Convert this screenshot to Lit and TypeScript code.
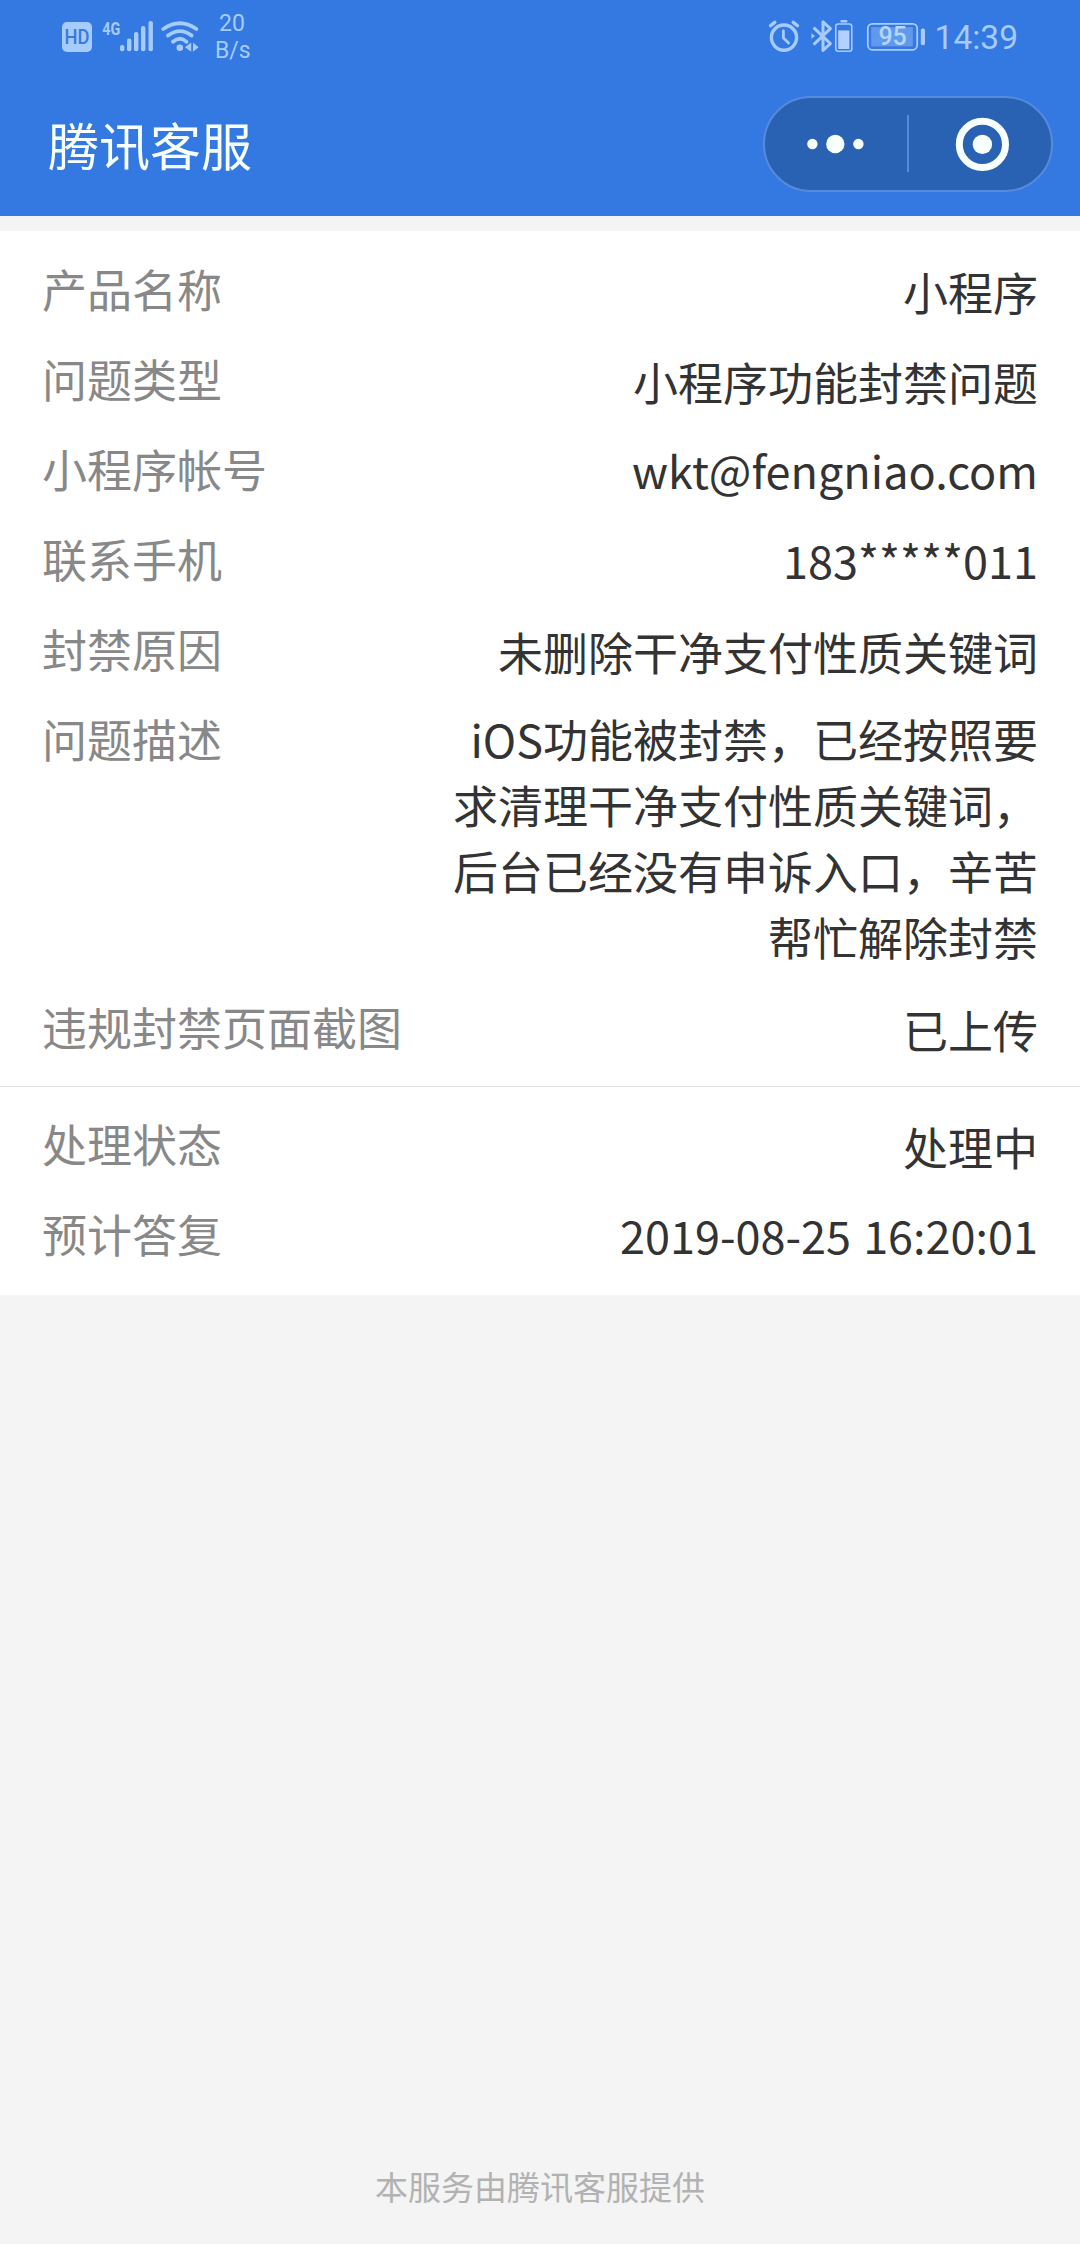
import { LitElement, html, svg, css } from "lit";
import { customElement, property } from "lit/decorators.js";

interface Entry {
  label: string;
  value: string;
  kind?: "long" | "latin" | "time";
}

const REQUEST: Entry[] = [
  { label: "产品名称", value: "小程序" },
  { label: "问题类型", value: "小程序功能封禁问题" },
  { label: "小程序帐号", value: "wkt@fengniao.com", kind: "latin" },
  { label: "联系手机", value: "183*****011", kind: "latin" },
  { label: "封禁原因", value: "未删除干净支付性质关键词" },
  {
    label: "问题描述",
    value: "iOS功能被封禁，已经按照要求清理干净支付性质关键词，后台已经没有申诉入口，辛苦帮忙解除封禁",
    kind: "long",
  },
  { label: "违规封禁页面截图", value: "已上传" },
];

const PROGRESS: Entry[] = [
  { label: "处理状态", value: "处理中" },
  { label: "预计答复", value: "2019-08-25 16:20:01", kind: "time" },
];

// [x, top] of each signal bar; all of them end on the same line
const BARS: [number, number][] = [[120, 45], [127, 38.5], [134, 32], [141, 26], [148.5, 21]];

@customElement("status-bar")
export class StatusBar extends LitElement {
  static styles = css`
    :host {
      display: flex;
      height: 72px;
      justify-content: space-between;
      padding: 0 61px 0 60px;
      color: #a6cbff;
      font-family: Roboto, sans-serif;
    }
    .side { display: flex; align-items: flex-start; }
    .icons { display: block; height: 72px; fill: currentColor; }
    .line { fill: none; stroke: currentColor; }
    .hd { font: 500 20px Roboto, sans-serif; fill: #3a78dc; }
    .net { font: 700 19px Roboto, sans-serif; }
    .level { font: 500 25px Roboto, sans-serif; fill: #b4d6ff; }
    .rate {
      margin: 10px 0 0 15px;
      width: 34px;
      font-size: 23px;
      line-height: 27px;
      text-align: center;
    }
    .clock { margin: 18px 1px 0 -1px; font-size: 33.5px; line-height: 40px; }
  `;

  render() {
    return html`
      <div class="side">
        <svg class="icons" width="140" viewBox="60 0 140 72">
          <rect x="62" y="22" width="30" height="30" rx="5" />
          <text class="hd" x="64.6" y="44.2" textLength="25" lengthAdjust="spacingAndGlyphs">HD</text>
          <text class="net" x="102.3" y="35" textLength="18" lengthAdjust="spacingAndGlyphs">4G</text>
          ${BARS.map(([x, top]) => svg`<rect x=${x} y=${top} width="4.4" height=${51.3 - top} rx="2" />`)}
          <g class="line" stroke-width="3.8" stroke-linecap="round">
            <path d="M163.2 29Q180 17.4 196.4 29" />
            <path d="M168 35.6Q180 26.6 191.6 35.6" />
            <path d="M173 41.8Q180 35.8 186.6 41.8" />
          </g>
          <circle cx="179.8" cy="47.8" r="3.3" />
          <path d="M191.2 42.6V51.8L185 47.2zM193 42.6V51.8L198.6 47.2z" />
        </svg>
        <div class="rate">20<br />B/s</div>
      </div>
      <div class="side">
        <svg class="icons" width="168" viewBox="768 0 168 72">
          <g class="line" stroke-width="3.4" stroke-linecap="round">
            <circle cx="784" cy="37.6" r="12.6" />
            <path d="M783.4 31V38L788.6 43" stroke-width="2.8" />
            <path d="M770.6 25.6L774.8 22.4M797.4 25.6L793.2 22.4" />
          </g>
          <g class="line" stroke-width="3" stroke-linejoin="round">
            <path d="M813.6 27.6L830.4 43.6L823 50.4V21.8L830.4 28.6L813.6 44.6" />
          </g>
          <path d="M811.4 33.2L815 36L811.4 38.8z" />
          <rect x="840.4" y="20" width="7" height="2.4" rx="1" />
          <rect class="line" x="835.8" y="24" width="16" height="27.2" rx="2.4" stroke-width="1.6" />
          <rect x="838.2" y="30.4" width="11.2" height="18.6" fill="#b4d0ff" />
          <rect class="line" x="867.8" y="23.8" width="49.4" height="26" rx="4.5" stroke-width="1.8" />
          <rect x="871.2" y="27.2" width="41.6" height="19.2" opacity="0.4" />
          <text class="level" x="878.4" y="44.9">95</text>
          <rect x="920.8" y="28.4" width="4.2" height="16.8" rx="1.6" />
        </svg>
        <div class="clock">14:39</div>
      </div>
    `;
  }
}

@customElement("nav-bar")
export class NavBar extends LitElement {
  static styles = css`
    :host {
      display: flex;
      height: 144px;
      align-items: center;
      justify-content: space-between;
      padding: 0 27px 0 48px;
    }
    .title { margin-bottom: 1px; font-size: 51px; line-height: 72px; color: #f8ffff; }
    .capsule {
      box-sizing: border-box;
      display: flex;
      align-items: center;
      width: 290px;
      height: 96px;
      border: 2px solid #568bdc;
      border-radius: 48px;
      background: #2962b3;
    }
    .action { flex: 1; display: flex; justify-content: center; }
    .separator { width: 2px; height: 57px; margin-bottom: 1px; background: #568bdc; }
    .glyph { display: block; overflow: visible; fill: #f8ffff; }
  `;

  render() {
    return html`
      <div class="title">腾讯客服</div>
      <div class="capsule">
        <div class="action">
          <svg class="glyph" width="58" height="56" viewBox="0 0 58 56">
            <circle cx="5.4" cy="28" r="5.2" />
            <circle cx="28.3" cy="28" r="9.2" />
            <circle cx="51.4" cy="28" r="5.2" />
          </svg>
        </div>
        <div class="separator"></div>
        <div class="action">
          <svg class="glyph" width="56" height="56" viewBox="0 0 56 56">
            <circle cx="30.4" cy="28.4" r="23.1" fill="none" stroke="#f8ffff" stroke-width="7" />
            <circle cx="30.4" cy="28.4" r="9.7" />
          </svg>
        </div>
      </div>
    `;
  }
}

@customElement("entry-list")
export class EntryList extends LitElement {
  @property({ attribute: false }) entries: Entry[] = [];

  static styles = css`
    :host { display: block; }
    .row {
      display: flex;
      justify-content: space-between;
      padding: 12px 42px;
      font-size: 45px;
      line-height: 66px;
    }
    .label { flex: none; color: #888; }
    .value {
      box-sizing: border-box;
      height: 66px;
      padding-top: 3px;
      max-width: 597px;
      text-align: right;
      color: #333;
    }
    .long { height: auto; padding-top: 0; }
    .latin, .time { padding-top: 1px; }
    .time { word-spacing: 2px; }
  `;

  render() {
    return this.entries.map(
      (e) => html`
        <div class="row">
          <div class="label">${e.label}</div>
          <div class="value ${e.kind ?? ""}">${e.value}</div>
        </div>
      `,
    );
  }
}

@customElement("app-root")
export class AppRoot extends LitElement {
  static styles = css`
    :host {
      display: flex;
      flex-direction: column;
      height: 2244px;
      background: #f4f4f4;
      font-family: "Noto Sans CJK SC", sans-serif;
    }
    .top { background: #3478e1; }
    .card { margin-top: 15px; background: #fff; }
    .request { padding: 13px 0 14px; border-bottom: 1px solid #e0e0e0; }
    .progress { padding: 12px 0 16px; }
    .footer {
      margin-top: auto;
      padding-bottom: 34px;
      font-size: 33px;
      line-height: 48px;
      text-align: center;
      color: #b2b2b2;
    }
  `;

  render() {
    return html`
      <header class="top">
        <status-bar></status-bar>
        <nav-bar></nav-bar>
      </header>
      <main class="card">
        <entry-list class="request" .entries=${REQUEST}></entry-list>
        <entry-list class="progress" .entries=${PROGRESS}></entry-list>
      </main>
      <footer class="footer">本服务由腾讯客服提供</footer>
    `;
  }
}
